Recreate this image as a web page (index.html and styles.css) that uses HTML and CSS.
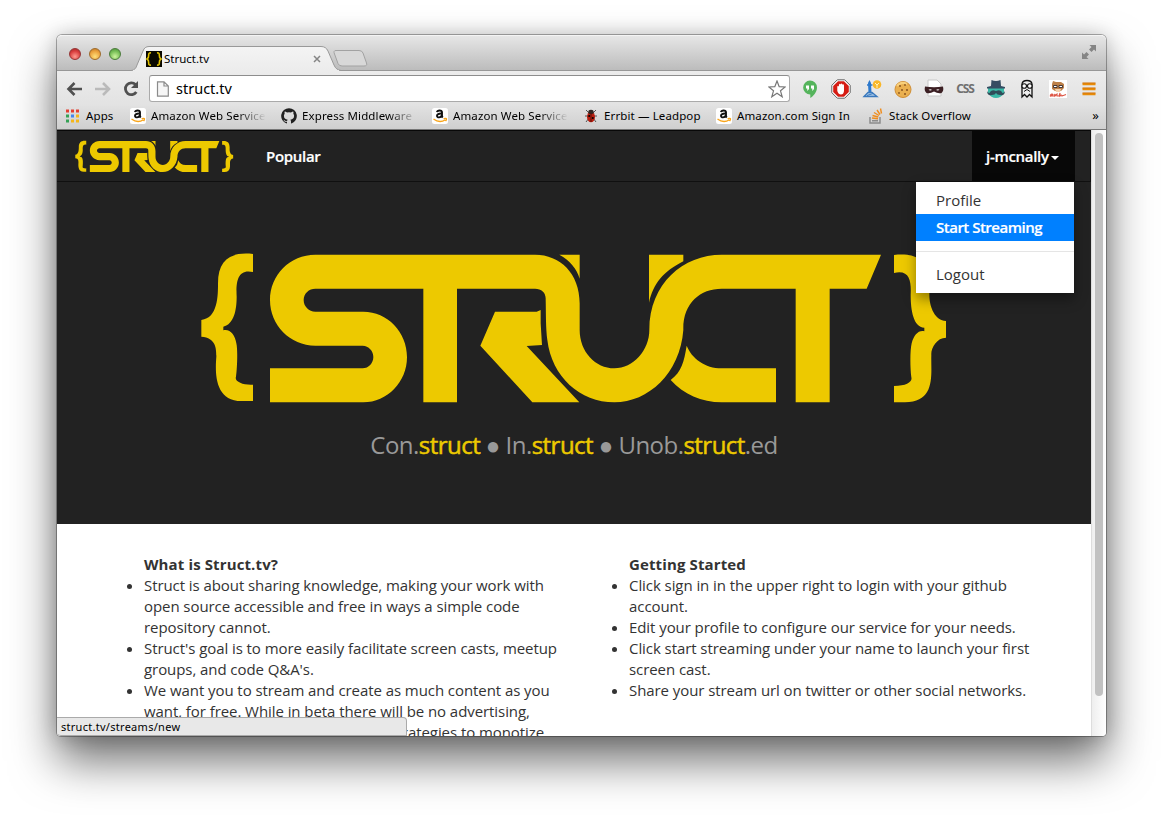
FILE: index.html
```html
<!DOCTYPE html>
<html lang="en">
<head>
<meta charset="utf-8">
<title>Struct.tv</title>
<link rel="stylesheet" href="styles.css">
</head>
<body>
<svg class="defs" width="0" height="0" aria-hidden="true">
  <defs>
    <symbol id="struct-logo" viewBox="30 30 2250 470" preserveAspectRatio="none">
      <path d="M189 42C120 34 84 62 84 130C84 165 84 235 34 240V290C80 293 79 330 79 350C76 390 70 483 155 483H189V434C160 436 132 425 138 410C141 390 144 330 139 310C135 285 120 266 100 271V260C132 252 140 210 140 170C138 130 140 85 189 96Z"/>
      <path d="M1035 44H376C300 44 240 105 240 180S300 317 376 317H518C536 317 550 333 550 351S536 385 518 385H240V487H520C592 487 651 426 651 351S592 215 520 215H376C357 215 341 200 341 180S357 146 376 146H700V487H801V146H1035C1055 146 1068 158 1067 178C1068 220 1067 265 1072 300C1085 410 1170 487 1273 487C1375 487 1470 400 1480 270C1478 190 1530 146 1595 146H1817V487H1919V146H2030L2073 44H1595C1480 44 1378 130 1378 270C1378 330 1330 385 1273 385S1169 335 1169 270V190C1169 100 1110 44 1035 44Z"/>
      <path d="M915 215H1040L1052 210V250L1056 315L1010 318L1168 487H1027L871 317Z"/>
      <path d="M1108 44H1169V116C1160 85 1140 62 1108 44Z"/>
      <path d="M1377 44H1480V64C1420 95 1390 130 1377 188Z"/>
      <path d="M1490 317C1505 355 1545 385 1595 385H1758V487H1595C1535 487 1480 463 1442 420C1475 395 1482 365 1490 317Z"/>
      <path d="M2112 45C2190 37 2216 70 2218 130V165C2218 200 2235 243 2268 243V293C2240 293 2222 325 2224 345C2222 400 2240 487 2145 487H2112V438C2150 438 2168 425 2164 412C2160 380 2160 330 2165 310C2172 285 2185 270 2203 274V263C2170 262 2162 210 2162 165C2164 125 2160 88 2112 99Z"/>
    </symbol>
    <symbol id="amazon" viewBox="0 0 16 16">
      <rect width="16" height="16" rx="2.5" fill="#fff"/>
      <path d="M5 4.2C5.3 2.2 10 1.6 10 4.2V7.8Q10 8.8 10.8 9.5M9.8 5.6C6.5 5.4 5 6.2 5 7.8C5 10 8.8 10 9.8 7.4" fill="none" stroke="#111" stroke-width="1.9"/>
      <path d="M1.5 11Q7.5 15.6 13.4 11.8M11.6 10.7Q14.4 10.2 14.5 10.8Q14.6 12 13.6 13.2" fill="none" stroke="#f8a51b" stroke-width="1.3"/>
    </symbol>
  </defs>
</svg>

<div class="window">
  <header class="titlebar">
    <div class="lights"><i class="light red"></i><i class="light amber"></i><i class="light green"></i></div>
    <svg class="tabs" width="240" height="26" viewBox="0 0 240 26">
      <defs><linearGradient id="tabfill" x2="0" y2="1"><stop stop-color="#f4f4f4"/><stop offset="1" stop-color="#ececec"/></linearGradient></defs>
      <path d="M0 24.500C4 24 5 22 6 19L12 5Q13.500 .5 18 .5H190Q195 .5 197 5L203 19Q205 24 210 24.500" fill="url(#tabfill)" stroke="#999"/>
      <path d="M2 25H208" stroke="#ececec" stroke-width="2"/>
      <path d="M205 4.500H228Q231 4.500 232 7L235.500 17Q236.500 20 233 20H211Q208 20 207 17.500L203.500 8Q202 4.500 205 4.500Z" fill="#d8d8d8" stroke="#a2a2a2"/>
      <rect x="15" y="5" width="16" height="16" fill="#090800"/>
      <path d="M20 7Q17.500 6.500 17.700 9Q17.900 12 16 13Q17.900 14 17.700 17Q17.500 19.500 20 19M26 7Q28.500 6.500 28.300 9Q28.100 12 30 13Q28.100 14 28.300 17Q28.500 19.500 26 19" fill="none" stroke="#dfc000" stroke-width="1.6"/>
      <path d="M183 10L189 16M189 10L183 16" stroke="#858585" stroke-width="1.500"/>
    </svg>
    <span class="tab-title">Struct.tv</span>
    <svg class="expand" width="16" height="16" viewBox="0 0 16 16"><path d="M8.500 1H15V7.500L13 5.500L10.500 8L8 5.500L10.500 3ZM1 8.500V15H7.500L5.500 13L8 10.500L5.500 8L3 10.500Z" fill="#858585"/></svg>
  </header>

  <div class="toolbar">
    <svg width="84" height="20" viewBox="0 0 84 20">
      <g fill="none" stroke-width="2.600">
        <path d="M17 10H4M9.500 4L3.500 10L9.500 16" stroke="#505050"/>
        <path d="M30 10H43M38 4L44 10L38 16" stroke="#bababa"/>
        <path d="M71.300 13A5.900 5.900 0 1 1 70.500 5.600" stroke="#505050" stroke-width="2.800"/>
      </g>
      <path d="M73 2V9H66Z" fill="#505050"/>
    </svg>
    <div class="omnibox">
      <svg width="14" height="16" viewBox="0 0 14 16"><path d="M1.500 .8H8L12.300 5V15.200H1.500ZM8 .8V5H12.300" fill="#f6f6f6" stroke="#8b8b8b" stroke-width="1.200"/></svg>
      <span class="url">struct.tv</span>
      <svg width="18" height="18" viewBox="0 0 18 18"><path d="M9 1L11.200 6.700L17.200 7L12.500 10.800L14.200 16.800L9 13.300L3.800 16.800L5.500 10.800L.8 7L6.800 6.700Z" fill="#fff" stroke="#777" stroke-width="1.200"/></svg>
    </div>
    <div class="extensions">
      <svg viewBox="0 0 20 20"><path d="M10 1.500A7.200 7 0 0 1 17 8.500C17 13 13.500 17 10.300 19V15.500A7 7 0 0 1 10 1.500Z" fill="#55b45c"/><path d="M6 6.500H9V10L7.300 12V9.500H6ZM11 6.500H14V10L12.300 12V9.500H11Z" fill="#fff"/></svg>
      <svg viewBox="0 0 20 20"><path d="M6.300 .8H13.700L19.200 6.300V13.700L13.700 19.200H6.300L.8 13.700V6.300Z" fill="#fff" stroke="#656565"/><path d="M7 2.200H13L17.800 7V13L13 17.800H7L2.200 13V7Z" fill="#d51d14"/><path d="M6.300 9V7.500Q7.500 6 8 8V5.500Q9 4 9.500 5.500Q10.500 3.500 11.300 5.500Q12.800 4.500 13 6.500V12Q12.500 15.500 10 15.500Q7.500 15.500 6.300 12Z" fill="#fff"/></svg>
      <svg viewBox="0 0 20 20"><path d="M6.500 14L6 4L7.500 1L9 4L9.500 14Z" fill="#2c78cc"/><path d="M5 6H10.500" stroke="#2c78cc" stroke-width="1.500"/><path d="M2 17.500L6 13.500H10L15 17.500Z" fill="#a8c9e8" stroke="#3978bd" stroke-width="1.300"/><path d="M5 16.500L11 14.500" stroke="#3978bd"/><circle cx="15" cy="5.500" r="4.300" fill="#f9b729"/><path d="M13 4L15 6L17 4M15 6V9" stroke="#fff3bd" fill="none"/></svg>
      <svg viewBox="0 0 20 20"><circle cx="10" cy="10.500" r="8" fill="#eab050" stroke="#d08e35"/><path d="M4 7Q8 2 14 5" stroke="#f8d07d" stroke-width="2" fill="none"/><g fill="#8a5520"><circle cx="7" cy="7" r="1"/><circle cx="12" cy="6" r=".9"/><circle cx="9" cy="11" r="1"/><circle cx="14" cy="11" r="1.100"/><circle cx="6" cy="14" r=".9"/><circle cx="12" cy="15" r="1"/></g></svg>
      <svg viewBox="0 0 20 20"><path d="M4 1H13L17 5V17H4Z" fill="#fff" stroke="#c8c8c8"/><path d="M1 7.500Q10 9 19 7.500Q20 12 17.500 14Q14 15 10 12.500Q6 15 2.500 14Q0 12 1 7.500Z" fill="#3c2024"/><path d="M4.500 10.800Q6.500 9.500 8 11Q6 12 4.500 10.800M12 11Q14 9.500 15.500 10.800Q14 12 12 11" fill="#fff"/></svg>
      <span class="css-icon">CSS</span>
      <svg viewBox="0 0 20 20"><path d="M2 9Q10 7 18 9V14Q15 19 10 19Q5 19 2 14Z" fill="#3ab8a6"/><path d="M5.500 1Q10 3 14.500 1L15 7L19 8V9.500H1V8L5 7Z" fill="#364d63"/><path d="M10 12Q5 10 3.500 14Q1.500 14 1 12Q1 17 6 16Q9 16 10 14Q11 16 14 16Q19 17 19 12Q18.500 14 16.500 14Q15 10 10 12Z" fill="#2f4d59"/></svg>
      <svg viewBox="0 0 20 20"><path d="M5 18V5Q5.500 1.500 10 1.500T15 5V18L12.500 15.500L10 18L7.500 15.500Z" fill="#eee" stroke="#111" stroke-width="1.300"/><circle cx="7.200" cy="7" r="2.300" fill="#fff" stroke="#111" stroke-width="1.100"/><circle cx="12.800" cy="7" r="2.300" fill="#fff" stroke="#111" stroke-width="1.100"/><path d="M7 12.500L10 10.500L13 12.500" stroke="#111" fill="none"/></svg>
      <svg viewBox="0 0 20 20"><path d="M1 1H19V19H1Z" fill="#fff"/><path d="M4 5L5 2L8 3H13L16 5V9L13 12H7L4 10Z" fill="#bd8048"/><path d="M5.500 8.500H9V6.500H5.500ZM11 8.500H14.500V6.500H11Z" fill="#fff" stroke="#372b2b" stroke-width=".9"/><path d="M7 10H13L12 13H8Z" fill="#f3d2ad"/><path d="M2 16.500Q4 14 5 15.500Q3 17.500 2 17H6L7 15V17L9 15V17H11L12 14V17Q14 15 14 17L18 15.500" fill="none" stroke="#dd5544" stroke-width="1.100"/></svg>
      <svg viewBox="0 0 20 20"><path d="M3.500 5H16.500M3.500 10H16.500M3.500 15H16.500" stroke="#e88c08" stroke-width="2.600"/><path d="M3.500 4H16.500M3.500 9H16.500M3.500 14H16.500" stroke="#cf7010" stroke-width=".8"/></svg>
    </div>
  </div>

  <nav class="bookmarks">
    <a class="w65"><svg viewBox="0 0 16 16"><path d="M1 1.500H4V4.500H1ZM6 1.500H9V4.500H6ZM11 1.500H14V4.500H11Z" fill="#e33e30"/><path d="M1 6.500H4V9.500H1ZM1 11.500H4V14.500H1Z" fill="#35a255"/><path d="M6 6.500H9V9.500H6Z" fill="#4385ee"/><path d="M11 6.500H14V9.500H11ZM6 11.500H9V14.500H6ZM11 11.500H14V14.500H11Z" fill="#f4b619"/></svg><span>Apps</span></a>
    <a class="w151 faded"><svg viewBox="0 0 16 16"><use href="#amazon"/></svg><span>Amazon Web Services</span></a>
    <a class="w151 faded"><svg viewBox="0 0 16 16"><path d="M8 .2A7.800 7.800 0 0 0 5.500 15.400C6 15.500 6 15 6 13.800C3.500 14.200 3.200 12.700 2.500 12C2 11.600 2.800 11.500 3.500 12.300C4.200 13.500 5.500 13 6.100 12.700L6.700 11.700C4.300 11.400 2.900 10.200 2.900 7.700Q2.900 6.600 3.700 5.700Q3.300 4.700 3.800 3.500Q4.700 3.500 6 4.400Q8 3.900 10 4.400Q11.300 3.500 12.200 3.500Q12.700 4.700 12.300 5.700Q13.100 6.600 13.100 7.700C13.100 10.200 11.700 11.400 9.300 11.700Q10 12.300 10 13.300V15Q10 15.500 10.500 15.400A7.800 7.800 0 0 0 8 .2Z" fill="#202020"/></svg><span>Express Middleware</span></a>
    <a class="w151 faded"><svg viewBox="0 0 16 16"><use href="#amazon"/></svg><span>Amazon Web Services</span></a>
    <a class="w133"><svg viewBox="0 0 16 16"><path d="M3 2L6 5M13 2L10 5M2 8H14M3 14L6 10M13 14L10 10" stroke="#555"/><ellipse cx="8" cy="9" rx="4" ry="5.200" fill="#b91e10"/><ellipse cx="8" cy="4" rx="2.700" ry="2.200" fill="#312724"/><path d="M8 5V14" stroke="#5a1109"/><circle cx="6.200" cy="8" r="1"/><circle cx="9.800" cy="10" r="1"/></svg><span>Errbit — Leadpop</span></a>
    <a class="w152"><svg viewBox="0 0 16 16"><use href="#amazon"/></svg><span>Amazon.com Sign In</span></a>
    <a class="last"><svg viewBox="0 0 16 16"><path d="M2 9V15H12V9M4 12.800H10" fill="none" stroke="#8c8c8c" stroke-width="1.500"/><path d="M4 10L10 10.700M4.500 7.500L10.300 9M6 4.500L11 7.500M9 2L12 6.500M12.500 .5L13.500 5.500" stroke="#ef8c1c" stroke-width="1.400"/></svg><span>Stack Overflow</span></a>
    <span class="more">»</span>
  </nav>

  <div class="viewport">
    <main class="page">
      <nav class="navbar">
        <svg class="brand" width="159" height="33"><use href="#struct-logo" width="159" height="33"/></svg>
        <a class="nav-link">Popular</a>
        <div class="user">
          <span>j-mcnally</span><i class="caret"></i>
          <ul class="menu">
            <li>Profile</li>
            <li class="active">Start Streaming</li>
            <li class="divider"></li>
            <li>Logout</li>
          </ul>
        </div>
      </nav>
      <section class="hero">
        <svg class="hero-logo" width="750" height="157"><use href="#struct-logo" width="750" height="156.670"/></svg>
        <p class="tagline">Con.<b>struct</b> ● In.<b>struct</b> ● Unob.<b>struct</b>.ed</p>
      </section>
      <section class="columns">
        <div class="col">
          <ul>
            <strong>What is Struct.tv?</strong>
            <li>Struct is about sharing knowledge, making your work with open source accessible and free in ways a simple code repository cannot.</li>
            <li>Struct's goal is to more easily facilitate screen casts, meetup groups, and code Q&amp;A's.</li>
            <li>We want you to stream and create as much content as you want, for free. While in beta there will be no advertising, however we will be exploring other strategies to monotize</li>
          </ul>
        </div>
        <div class="col">
          <ul>
            <strong>Getting Started</strong>
            <li>Click sign in in the upper right to login with your github account.</li>
            <li>Edit your profile to configure our service for your needs.</li>
            <li>Click start streaming under your name to launch your first screen cast.</li>
            <li>Share your stream url on twitter or other social networks.</li>
          </ul>
        </div>
      </section>
    </main>
    <div class="scrollbar"><i></i></div>
    <div class="status">struct.tv/streams/new</div>
  </div>
</div>
</body>
</html>
```
FILE: styles.css
```css
* { box-sizing: border-box; }
body { margin: 0; height: 815px; padding: 35px 57px 0; overflow: hidden; background: #fff; font-family: "Open Sans", "Noto Sans", sans-serif; }
.defs { display: block; height: 0; }
.window { width: 1049px; height: 701px; border-radius: 5px 5px 4px 4px; display: flex; flex-direction: column; background: #fff; box-shadow: 0 0 0 1px rgba(0,0,0,.3), 0 0 20px rgba(0,0,0,.2), 0 25px 46px rgba(0,0,0,.56); }

.titlebar { height: 36px; display: flex; align-items: flex-end; position: relative; padding: 0 9px 0 12px; border-radius: 5px 5px 0 0; border-top: 1px solid #f4f4f4; border-bottom: 1px solid #979797; background: linear-gradient(#e6e6e6, #bcbcbc); }
.lights { display: flex; gap: 8px; margin-bottom: 10px; width: 62px; }
.light { flex: none; width: 12px; height: 12px; border-radius: 50%; border: 1px solid #777; }
.red { background: radial-gradient(circle at 50% 75%, #ff9b90, #d83d3d 60%, #9f2525); border-color: #963535; }
.amber { background: radial-gradient(circle at 50% 75%, #ffe07a, #eba13c 60%, #b56f20); border-color: #9e6b2b; }
.green { background: radial-gradient(circle at 50% 75%, #cdf59e, #75bd55 60%, #468a37); border-color: #4b7c3b; }
.tabs { margin-bottom: -2px; }
.tab-title { position: absolute; left: 107px; top: 15px; font: 11.5px/16px "Noto Sans", sans-serif; color: #000; }
.expand { margin: 0 0 10px auto; }

.toolbar { height: 35px; display: flex; align-items: center; padding: 0 7px 0 8px; background: linear-gradient(#ececec, #e2e2e2); }
.omnibox { width: 641px; height: 27px; display: flex; align-items: center; background: #fff; border: 1px solid #aaa; border-top-color: #8d8d8d; border-radius: 3px; padding: 0 3px 0 6px; }
.url { flex: 1; margin: -2px 0 0 6px; font: 14.5px/20px "Noto Sans", sans-serif; color: #000; }
.extensions { display: flex; gap: 11px; margin-left: 10px; align-items: center; }
.extensions > * { flex: none; width: 20px; height: 20px; }
.css-icon { font: bold 12px/19px "Noto Sans", sans-serif; color: #707070; letter-spacing: -1.2px; text-align: center; }

.bookmarks { height: 23px; display: flex; padding: 0 7px 0 8px; background: linear-gradient(#e1e1e1, #cfcfcf); font: 11.5px/19px "Noto Sans", sans-serif; letter-spacing: .12px; color: #000; }
.bookmarks a { display: flex; gap: 5px; flex: none; white-space: nowrap; overflow: hidden; }
.bookmarks svg { width: 16px; height: 16px; margin-top: 2px; flex: none; }
.w65 { width: 65px; }
.w151 { width: 151px; }
.w133 { width: 133px; }
.w152 { width: 152px; }
.faded span { width: 115px; overflow: hidden; -webkit-mask-image: linear-gradient(90deg, #000 75%, transparent); mask-image: linear-gradient(90deg, #000 75%, transparent); }
.bookmarks .last { flex: 1; }
.more { font-size: 13px; }

.viewport { position: relative; flex: 1; display: flex; min-height: 0; overflow: hidden; border-radius: 0 0 4px 4px; border-top: 1px solid #777; }
.page { width: 1034px; overflow: hidden; background: #fff; color: #333; }
.navbar { height: 52px; display: flex; align-items: stretch; padding: 0 15px 0 18px; background: #222; border: 1px solid #101010; border-left: 0; border-top-color: #080808; color: #fff; font-weight: 600; font-size: 15px; }
.brand { margin-top: 9px; fill: #edc900; }
.nav-link { margin-left: 32px; line-height: 50px; letter-spacing: -.3px; -webkit-text-stroke: .2px #fff; }
.user { position: relative; margin-left: auto; width: 103px; display: flex; align-items: center; gap: 2px; padding-left: 14px; background: #080808; letter-spacing: -.3px; -webkit-text-stroke: .2px #fff; }
.caret { border: 4px solid transparent; border-top-color: #fff; border-bottom: 0; margin-top: 3px; }
.menu { position: absolute; z-index: 2; top: 51px; right: 1px; width: 158px; height: 111px; margin: 0; padding: 5px 0; list-style: none; background: #fff; color: #333; font-weight: 400; box-shadow: 0 6px 12px rgba(0,0,0,.4); letter-spacing: 0; -webkit-text-stroke: 0; }
.menu li { height: 27px; line-height: 27px; padding-left: 20px; }
.menu .active { background: #0080ff; color: #fff; font-weight: 600; letter-spacing: -.5px; -webkit-text-stroke: .2px #fff; }
.menu .divider { height: 1px; margin: 10px 0 9px; padding: 0; background: #e5e5e5; }
.hero { height: 342px; display: flex; flex-direction: column; align-items: center; padding-top: 68px; background: #222; fill: #edc900; }
.hero-logo { margin-left: 2px; }
.tagline { margin: 21px 0 0; font-size: 24px; line-height: 34px; letter-spacing: -.53px; color: #999; white-space: nowrap; }
.tagline b { color: #edc900; font-weight: 400; -webkit-text-stroke: .5px #edc900; }
.columns { display: flex; width: 970px; margin: 30px 0 0 32px; }
.col { width: 485px; padding: 0 15px; }
.col ul { margin: 0; padding-left: 40px; font-size: 15px; line-height: 21px; letter-spacing: -.07px; }
.col strong { letter-spacing: .12px; }
.scrollbar { width: 15px; padding: 3px 3px 0 3px; background: linear-gradient(90deg, #eee, #fff); border-left: 1px solid #ddd; }
.scrollbar i { display: block; width: 8px; height: 563px; border-radius: 4px; background: #c1c1c1; }
.status { position: absolute; left: 0; bottom: 0; width: 350px; height: 19px; padding-left: 4px; border: 1px solid #aaa; border-left: 0; border-radius: 0 4px 0 4px; background: #e8e8e8; color: #000; font: 11px/17px "Noto Sans", sans-serif; letter-spacing: .28px; }
```
